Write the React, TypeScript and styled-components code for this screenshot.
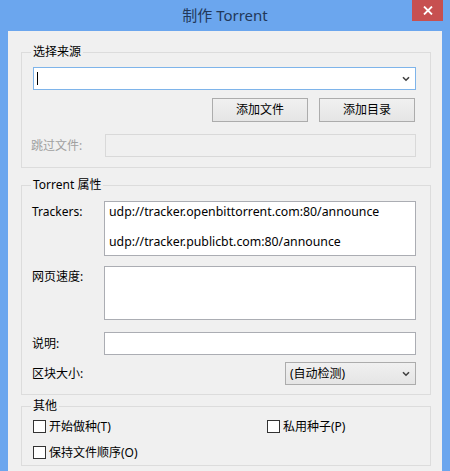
import React from "react";
import styled, { createGlobalStyle } from "styled-components";

const FONT = `"Noto Sans", "Noto Sans CJK SC", sans-serif`;

const GlobalStyle = createGlobalStyle`
  html, body { margin: 0; padding: 0; background: #6ba6ee; }
  body { font-family: ${FONT}; font-size: 12px; color: #000; }
  * { box-sizing: border-box; }
`;

const Window = styled.div`
  width: 450px;
  height: 471px;
  overflow: hidden;
  background: #6ba6ee;
  display: flex;
  flex-direction: column;
`;

const TitleBar = styled.div`
  height: 31px;
  flex: none;
  display: grid;
  grid-template-columns: 1fr auto 1fr;
  align-items: start;
`;

const Title = styled.div`
  grid-column: 2;
  font-size: 15px;
  line-height: 31px;
  color: #22385a;
  font-family: ${FONT};
`;

const CloseButton = styled.div`
  grid-column: 3;
  justify-self: end;
  margin-right: 7px;
  width: 31px;
  height: 21px;
  background: #c75050;
  display: flex;
  align-items: center;
  justify-content: center;
`;

const Client = styled.div`
  flex: 1;
  margin: 0 8px;
  background: #f0f0f0;
  padding: 0 11px 0 13px;
  display: flex;
  flex-direction: column;
`;

const Group = styled.fieldset<{ $mt: number }>`
  margin: ${(p) => p.$mt}px 0 0;
  padding: 0;
  border: 1px solid #dcdcdc;
  min-width: 0;
  flex: none;
`;

const GroupBody = styled.div<{ $pad: string }>`
  padding: ${(p) => p.$pad};
`;

const Legend = styled.legend`
  margin-left: 9px;
  padding: 0 2px;
  line-height: 16px;
  font-size: 12px;
  color: #000;
`;

const ComboEdit = styled.div`
  height: 23px;
  background: #fff;
  border: 1px solid #7eb4ea;
  display: flex;
  align-items: center;
  justify-content: space-between;
  padding: 0 5px 0 3px;
`;

const Caret = styled.span`
  width: 1px;
  height: 13px;
  background: #000;
`;

const ButtonRow = styled.div`
  display: flex;
  justify-content: flex-end;
  gap: 11px;
  margin-top: 8px;
  padding-right: 1px;
`;

const Button = styled.div`
  width: 96px;
  height: 24px;
  border: 1px solid #acacac;
  background: linear-gradient(#f0f0f0, #e5e5e5);
  display: flex;
  align-items: center;
  justify-content: center;
  font-size: 12px;
  line-height: 16px;
`;

const SkipRow = styled.div`
  display: grid;
  grid-template-columns: 72px 1fr;
  align-items: center;
  margin-top: 12px;
`;

const DisabledLabel = styled.span`
  color: #a0a0a0;
  line-height: 16px;
  margin-left: -2px;
`;

const DisabledInput = styled.div`
  height: 23px;
  border: 1px solid #d9d9d9;
  background: #f0f0f0;
`;

const FieldRow = styled.div<{ $mt: number; $align: string }>`
  display: grid;
  grid-template-columns: 72px 1fr;
  align-items: ${(p) => p.$align};
  margin-top: ${(p) => p.$mt}px;
`;

const Label = styled.span<{ $pt?: number }>`
  line-height: 16px;
  padding-top: ${(p) => p.$pt ?? 0}px;
`;

const TextArea = styled.textarea<{ $h: number }>`
  display: block;
  width: 100%;
  height: ${(p) => p.$h}px;
  margin: 0;
  resize: none;
  overflow: hidden;
  background: #fff;
  border: 1px solid #abadb3;
  padding: 2px 4px;
  font-family: ${FONT};
  font-size: 12.3px;
  line-height: 15px;
  color: #000;
  outline: none;
`;

const LineEdit = styled.div`
  height: 23px;
  background: #fff;
  border: 1px solid #abadb3;
`;

const SelectBox = styled.div`
  justify-self: end;
  width: 131px;
  height: 23px;
  border: 1px solid #acacac;
  background: linear-gradient(#f0f0f0, #e5e5e5);
  display: flex;
  align-items: center;
  justify-content: space-between;
  padding: 0 5px 0 4px;
  line-height: 16px;
`;

const CheckGrid = styled.div`
  display: grid;
  grid-template-columns: 234px 1fr;
  row-gap: 13px;
`;

const CheckItem = styled.label`
  display: flex;
  align-items: center;
  gap: 3px;
  height: 13px;
  line-height: 16px;
`;

const Box = styled.span`
  width: 13px;
  height: 13px;
  border: 1px solid #333;
  background: #fff;
  flex: none;
`;

const Chevron = () => (
  <svg width="8" height="6" viewBox="0 0 8 6">
    <path d="M1 1.2 L4 4.2 L7 1.2" fill="none" stroke="#404040" strokeWidth="1.6" />
  </svg>
);

const trackers =
  "udp://tracker.openbittorrent.com:80/announce\n\nudp://tracker.publicbt.com:80/announce";

export default function App() {
  return (
    <>
      <GlobalStyle />
      <Window>
        <TitleBar>
          <Title>制作 Torrent</Title>
          <CloseButton>
            <svg width="10" height="9" viewBox="0 0 10 9">
              <path d="M1 0.5 L9 8.5 M9 0.5 L1 8.5" stroke="#fff" strokeWidth="1.8" />
            </svg>
          </CloseButton>
        </TitleBar>
        <Client>
          <Group $mt={13}>
            <Legend>选择来源</Legend>
            <GroupBody $pad="7px 14px 10px 11px">
              <ComboEdit>
                <Caret />
                <Chevron />
              </ComboEdit>
              <ButtonRow>
                <Button>添加文件</Button>
                <Button>添加目录</Button>
              </ButtonRow>
              <SkipRow>
                <DisabledLabel>跳过文件:</DisabledLabel>
                <DisabledInput />
              </SkipRow>
            </GroupBody>
          </Group>

          <Group $mt={9}>
            <Legend>Torrent 属性</Legend>
            <GroupBody $pad="8px 14px 9px 10px">
              <FieldRow $mt={0} $align="start">
                <Label $pt={3}>Trackers:</Label>
                <TextArea $h={55} readOnly value={trackers} />
              </FieldRow>
              <FieldRow $mt={10} $align="start">
                <Label $pt={3}>网页速度:</Label>
                <TextArea $h={54} readOnly value="" />
              </FieldRow>
              <FieldRow $mt={12} $align="center">
                <Label>说明:</Label>
                <LineEdit />
              </FieldRow>
              <FieldRow $mt={7} $align="center">
                <Label>区块大小:</Label>
                <SelectBox>
                  <span>(自动检测)</span>
                  <Chevron />
                </SelectBox>
              </FieldRow>
            </GroupBody>
          </Group>

          <Group $mt={3}>
            <Legend>其他</Legend>
            <GroupBody $pad="6px 14px 6px 11px">
              <CheckGrid>
                <CheckItem>
                  <Box />
                  开始做种(T)
                </CheckItem>
                <CheckItem>
                  <Box />
                  私用种子(P)
                </CheckItem>
                <CheckItem>
                  <Box />
                  保持文件顺序(O)
                </CheckItem>
              </CheckGrid>
            </GroupBody>
          </Group>
        </Client>
      </Window>
    </>
  );
}
